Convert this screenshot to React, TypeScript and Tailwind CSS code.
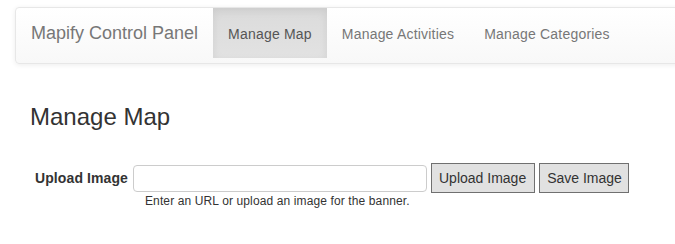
import React from "react";

const navLinks = ["Manage Map", "Manage Activities", "Manage Categories"];

const App = () => {
  return (
    <div
      className="w-[675px] h-[244px] overflow-hidden bg-white text-[#333] text-[14px]"
      style={{ fontFamily: '"Liberation Sans", Arial, sans-serif' }}
    >
      {/* Navbar */}
      <div className="ml-[15px] mt-[7px] w-[720px] h-[57px] rounded-[4px] border border-[#e7e7e7] bg-gradient-to-b from-white to-[#f8f8f8] shadow-[inset_0_1px_0_rgba(255,255,255,0.15),0_1px_5px_rgba(0,0,0,0.075)]">
        <div className="flex h-[50px]">
          <div className="flex items-center px-[15px] text-[18px] leading-[20px] text-[#777]">
            Mapify Control Panel
          </div>
          {navLinks.map((link, i) => (
            <div
              key={link}
              className={
                i === 0
                  ? "flex items-center px-[15px] text-[#555] bg-gradient-to-b from-[#dbdbdb] to-[#e2e2e2] shadow-[inset_0_3px_9px_rgba(0,0,0,0.075)]"
                  : "flex items-center px-[15px] text-[#777]"
              }
            >
              <span className="leading-[20px] pt-[2px] tracking-[0.2px]">{link}</span>
            </div>
          ))}
        </div>
      </div>

      {/* Content */}
      <div className="px-[31px]">
        <h3 className="mt-[40px] -ml-[1px] text-[24px] leading-[26px] font-normal">Manage Map</h3>

        <div className="mt-[33px] flex items-center">
          <label className="ml-[4px] font-bold text-[14px] leading-[20px] tracking-[0.1px]">Upload Image</label>
          <input
            type="text"
            className="ml-[5px] w-[294px] h-[27px] rounded-[4px] border border-[#ccc] bg-white px-2 outline-none"
          />
          <button className="ml-[4px] h-[30px] pl-[7px] pr-[8px] border border-[#707070] bg-[#e1e1e1] text-[14px] text-[#333]">
            Upload Image
          </button>
          <button className="ml-[4px] h-[30px] pl-[7px] pr-[6px] border border-[#707070] bg-[#e1e1e1] text-[14px] text-[#333]">
            Save Image
          </button>
        </div>
        <div className="ml-[114px] mt-[1px] text-[12px] leading-[14px] tracking-[0.12px]">
          Enter an URL or upload an image for the banner.
        </div>
      </div>
    </div>
  );
};

export default App;
